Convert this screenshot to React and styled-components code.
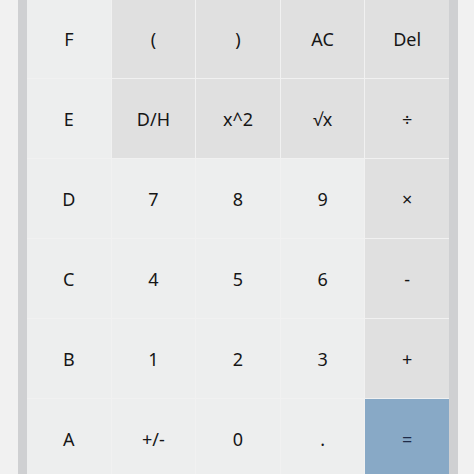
import styled, { createGlobalStyle } from "styled-components";

const GlobalStyle = createGlobalStyle`
  html, body {
    margin: 0;
    padding: 0;
    background-color: #f1f1f1;
    overflow: hidden;
  }
`;

const Wrapper = styled.div`
  box-sizing: border-box;
  width: 474px;
  height: 474px;
  display: flex;
  padding-left: 18px;
  overflow: hidden;
`;

const SideBar = styled.div`
  width: 9px;
  flex-shrink: 0;
  background-color: #cfd0d2;
`;

const Pad = styled.div`
  width: 422px;
  flex-shrink: 0;
  margin-top: -1px;
  display: grid;
  grid-template-columns: repeat(5, 1fr);
  grid-auto-rows: 79px;
  gap: 1px;
  background-color: #f1f1f1;
  align-self: flex-start;
`;

const colors = {
  light: "#edeeee",
  dark: "#e0e0e0",
  equal: "#88a9c6",
};

const Key = styled.div`
  display: flex;
  justify-content: center;
  align-items: center;
  background-color: ${(p) => colors[p.$kind || "light"]};
  color: ${(p) => (p.$kind === "equal" ? "#1f2b48" : "#161616")};
  font-family: "Noto Sans", "Open Sans", sans-serif;
  font-size: 18px;
  font-weight: 400;
  cursor: pointer;
  user-select: none;
`;

const rows = [
  [["F"], ["(", "dark"], [")", "dark"], ["AC", "dark"], ["Del", "dark"]],
  [["E"], ["D/H", "dark"], ["x^2", "dark"], ["√x", "dark"], ["÷", "dark"]],
  [["D"], ["7"], ["8"], ["9"], ["×", "dark"]],
  [["C"], ["4"], ["5"], ["6"], ["-", "dark"]],
  [["B"], ["1"], ["2"], ["3"], ["+", "dark"]],
  [["A"], ["+/-"], ["0"], ["."], ["=", "equal"]],
];

export default function App() {
  return (
    <>
      <GlobalStyle />
      <Wrapper>
        <SideBar />
        <Pad>
          {rows.flat().map(([label, kind], i) => (
            <Key key={i} $kind={kind}>
              {label}
            </Key>
          ))}
        </Pad>
        <SideBar />
      </Wrapper>
    </>
  );
}
